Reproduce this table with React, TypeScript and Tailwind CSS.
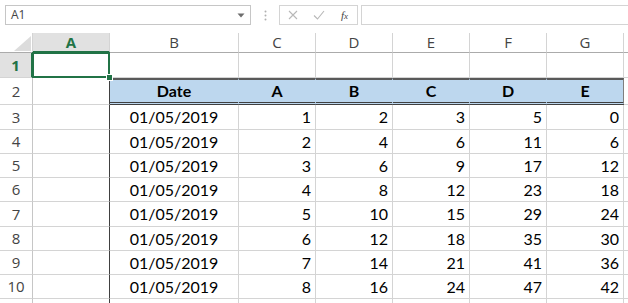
import React from "react";

const rows: [string, number, number, number, number, number][] = [
  ["01/05/2019", 1, 2, 3, 5, 0],
  ["01/05/2019", 2, 4, 6, 11, 6],
  ["01/05/2019", 3, 6, 9, 17, 12],
  ["01/05/2019", 4, 8, 12, 23, 18],
  ["01/05/2019", 5, 10, 15, 29, 24],
  ["01/05/2019", 6, 12, 18, 35, 30],
  ["01/05/2019", 7, 14, 21, 41, 36],
  ["01/05/2019", 8, 16, 24, 47, 42],
];

const colHdr =
  "flex items-center justify-center border-r border-b border-r-[#d4d4d4] border-b-[#ababab] bg-white text-[15px] text-[#444] font-['Open_Sans',sans-serif]";
const rowHdr =
  "flex items-center justify-center border-r border-b border-r-[#c6c6c6] border-b-[#d4d4d4] bg-white text-[15px] text-[#444] font-['Open_Sans',sans-serif]";
const cell = "border-r border-b border-[#d4d4d4]";
const dataFont = "font-['Lato',sans-serif] text-[16px] text-black";

export default function App() {
  return (
    <div className="w-[628px] h-[303px] bg-white overflow-hidden">
      {/* formula bar */}
      <div className="h-[33px] flex items-start pt-[5px] pl-[5px]">
        <div className="w-[246px] h-[20px] border border-[#c6c6c6] flex items-center justify-between pl-[5px] pr-[5px]">
          <span className="text-[12px] text-[#444] font-['Open_Sans',sans-serif] leading-none">A1</span>
          <svg width="8" height="5" viewBox="0 0 8 5">
            <path d="M0.5 0.5 L7.5 0.5 L4 4.5 Z" fill="#6d6d6d" />
          </svg>
        </div>
        <div className="w-[28px] h-[20px] flex items-center justify-center">
          <svg width="3" height="11" viewBox="0 0 3 11">
            <circle cx="1.5" cy="1.5" r="1" fill="#b0b0b0" />
            <circle cx="1.5" cy="5.5" r="1" fill="#b0b0b0" />
            <circle cx="1.5" cy="9.5" r="1" fill="#b0b0b0" />
          </svg>
        </div>
        <div className="w-[79px] h-[20px] border border-[#d4d4d4] flex items-center">
          <div className="w-[26px] flex justify-center">
            <svg width="10" height="10" viewBox="0 0 10 10">
              <path d="M1 1 L9 9 M9 1 L1 9" stroke="#b8b8b8" strokeWidth="1.1" />
            </svg>
          </div>
          <div className="w-[26px] flex justify-center">
            <svg width="12" height="10" viewBox="0 0 12 10">
              <path d="M1 5.5 L4.5 9 L11 1" stroke="#b8b8b8" strokeWidth="1.1" fill="none" />
            </svg>
          </div>
          <div className="w-[25px] flex justify-center">
            <span className="text-[11px] italic text-[#444] font-['Liberation_Serif',serif] leading-none">
              f<span className="text-[9px]">x</span>
            </span>
          </div>
        </div>
        <div className="ml-[3px] flex-1 h-[20px] border border-r-0 border-[#d4d4d4]" />
      </div>

      {/* grid */}
      <div className="grid grid-cols-[33px_77px_129px_77px_77px_77px_77px_77px_1fr] grid-rows-[20px_25px_27px_25px_24px_24px_24px_25px_24px_24px_24px_10px]">
        {/* column headers */}
        <div className="relative border-r border-b border-r-[#d4d4d4] border-b-[#ababab] bg-white">
          <svg className="absolute right-[1px] bottom-[1px]" width="17" height="15" viewBox="0 0 17 15">
            <path d="M17 0 L17 15 L0 15 Z" fill="#dcdcdc" />
          </svg>
        </div>
        <div className="flex items-center justify-center border-r border-r-[#d4d4d4] border-b-2 border-b-[#217346] bg-[#e1e1e1] text-[15px] font-bold text-[#217346] font-['Open_Sans',sans-serif]">
          A
        </div>
        {["B", "C", "D", "E", "F", "G"].map((c) => (
          <div key={c} className={colHdr}>
            {c}
          </div>
        ))}
        <div className="border-b border-b-[#ababab] bg-white" />

        {/* row 1 */}
        <div className="flex items-center justify-center border-r-2 border-b border-r-[#217346] border-b-[#d4d4d4] bg-[#e1e1e1] text-[15px] font-bold text-[#217346] font-['Open_Sans',sans-serif]">
          1
        </div>
        <div className={`${cell} relative`}>
          <div className="absolute -left-px -top-px -right-px -bottom-px border-2 border-[#217346]" />
          <div className="absolute -right-[4px] -bottom-[4px] w-[7px] h-[7px] bg-[#217346] border border-white" />
        </div>
        {[0, 1, 2, 3, 4, 5].map((i) => (
          <div key={i} className={cell} />
        ))}
        <div className="border-b border-[#d4d4d4]" />

        {/* row 2: table header */}
        <div className={rowHdr}>2</div>
        <div className="border-r border-b border-r-[#404040] border-b-[#d4d4d4]" />
        {["Date", "A", "B", "C", "D", "E"].map((h, i) => (
          <div
            key={h + i}
            className={`flex items-center justify-center bg-[#bdd7ee] border-t-2 border-t-[#595959] border-b-[3px] border-double border-b-[#404040] ${
              i === 5 ? "border-r border-r-[#7f7f7f]" : "border-r border-r-[#bdd7ee]"
            } font-['Lato',sans-serif] text-[16px] font-bold text-black`}
          >
            {h}
          </div>
        ))}
        <div className="border-b border-[#d4d4d4]" />

        {/* data rows */}
        {rows.map((r, ri) => (
          <React.Fragment key={ri}>
            <div className={rowHdr}>{ri + 3}</div>
            <div className="border-r border-b border-r-[#404040] border-b-[#d4d4d4]" />
            <div className={`${cell} ${dataFont} flex items-center justify-center`}>{r[0]}</div>
            {r.slice(1).map((v, vi) => (
              <div key={vi} className={`${cell} ${dataFont} flex items-center justify-end pr-[4px]`}>
                {v}
              </div>
            ))}
            <div className="border-b border-[#d4d4d4]" />
          </React.Fragment>
        ))}

        {/* partial row 11 */}
        <div className="border-r border-r-[#c6c6c6]" />
        <div className="border-r border-r-[#404040]" />
        {[0, 1, 2, 3, 4, 5].map((i) => (
          <div key={i} className="border-r border-[#d4d4d4]" />
        ))}
        <div />
      </div>
    </div>
  );
}
